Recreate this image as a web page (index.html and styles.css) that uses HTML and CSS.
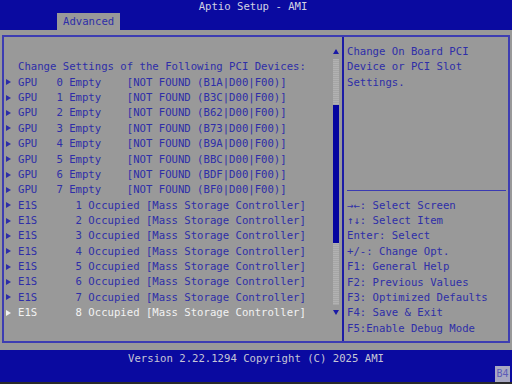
FILE: index.html
```html
<!DOCTYPE html>
<html lang="en">
<head>
    <meta charset="UTF-8">
    <title>Aptio Setup - AMI</title>
    <link rel="stylesheet" href="styles.css">
</head>
<body>
    <div class="screen">
        <!-- 顶部标题栏 -->
        <header class="topbar">
            <div class="title">Aptio Setup - AMI</div>
            <div class="tabs">
                <span class="tab">Advanced</span>
            </div>
        </header>

        <!-- 主框体 -->
        <main class="frame">
            <section class="menu">
                <div class="line"> </div>
                <div class="line heading">Change Settings of the Following PCI Devices:</div>
                <div class="item">GPU   0 Empty    [NOT FOUND (B1A|D00|F00)]</div>
                <div class="item">GPU   1 Empty    [NOT FOUND (B3C|D00|F00)]</div>
                <div class="item">GPU   2 Empty    [NOT FOUND (B62|D00|F00)]</div>
                <div class="item">GPU   3 Empty    [NOT FOUND (B73|D00|F00)]</div>
                <div class="item">GPU   4 Empty    [NOT FOUND (B9A|D00|F00)]</div>
                <div class="item">GPU   5 Empty    [NOT FOUND (BBC|D00|F00)]</div>
                <div class="item">GPU   6 Empty    [NOT FOUND (BDF|D00|F00)]</div>
                <div class="item">GPU   7 Empty    [NOT FOUND (BF0|D00|F00)]</div>
                <div class="item">E1S      1 Occupied [Mass Storage Controller]</div>
                <div class="item">E1S      2 Occupied [Mass Storage Controller]</div>
                <div class="item">E1S      3 Occupied [Mass Storage Controller]</div>
                <div class="item">E1S      4 Occupied [Mass Storage Controller]</div>
                <div class="item">E1S      5 Occupied [Mass Storage Controller]</div>
                <div class="item">E1S      6 Occupied [Mass Storage Controller]</div>
                <div class="item">E1S      7 Occupied [Mass Storage Controller]</div>
                <div class="item selected">E1S      8 Occupied [Mass Storage Controller]</div>
            </section>

            <!-- 滚动条 -->
            <div class="scroll">
                <div class="scroll-up"></div>
                <div class="track">
                    <div class="thumb"></div>
                </div>
                <div class="scroll-down"></div>
            </div>

            <!-- 帮助区 -->
            <aside class="help">
                <div class="help-desc">
                    <div class="line">Change On Board PCI</div>
                    <div class="line">Device or PCI Slot</div>
                    <div class="line">Settings.</div>
                </div>
                <div class="help-keys">
                    <div class="help-sep"></div>
                    <div class="line">→←: Select Screen</div>
                    <div class="line">↑↓: Select Item</div>
                    <div class="line">Enter: Select</div>
                    <div class="line">+/-: Change Opt.</div>
                    <div class="line">F1: General Help</div>
                    <div class="line">F2: Previous Values</div>
                    <div class="line">F3: Optimized Defaults</div>
                    <div class="line">F4: Save &amp; Exit</div>
                    <div class="line">F5:Enable Debug Mode</div>
                </div>
            </aside>
        </main>

        <!-- 底部版本栏 -->
        <footer class="bottombar">
            <div class="version">Version 2.22.1294 Copyright (C) 2025 AMI</div>
            <span class="badge">B4</span>
        </footer>
    </div>
</body>
</html>
```

FILE: styles.css
```css
/* 基础样式 */
* {
    margin: 0;
    padding: 0;
    box-sizing: border-box;
}

html, body {
    background-color: #222;
}

.screen {
    width: 512px;
    height: 384px;
    display: flex;
    flex-direction: column;
    background-color: #999999;
    color: #2e2ea8;
    font-family: "DejaVu Sans Mono", "Liberation Mono", monospace;
    font-size: 10.63px;
    line-height: 15.36px;
    overflow: hidden;
}

/* 顶部标题栏 */
.topbar {
    height: 30px;
    display: flex;
    flex-direction: column;
    background-color: #0a0aa0;
}

.title {
    height: 13px;
    line-height: 13px;
    text-align: center;
    padding-right: 6px;
    color: #d2d2e2;
}

.tabs {
    height: 17px;
    display: flex;
    padding-left: 57px;
}

.tab {
    padding: 1px 6px 0;
    background-color: #999999;
    color: #2e2ea8;
}

/* 主框体 */
.frame {
    height: 308px;
    margin: 5px 2px 0;
    display: flex;
    border: 2px solid #3d3db2;
}

.menu {
    flex: 1;
    padding: 7px 0 5px 2px;
}

.line {
    height: 15.36px;
    white-space: pre;
}

.heading {
    padding-left: 12px;
}

.item {
    height: 15.36px;
    display: flex;
    align-items: center;
    white-space: pre;
}

.item::before {
    content: "";
    width: 0;
    height: 0;
    border-left: 5px solid currentColor;
    border-top: 3px solid transparent;
    border-bottom: 3px solid transparent;
    margin-right: 7px;
}

.item.selected {
    color: #f2f2f2;
}

/* 滚动条 */
.scroll {
    width: 6px;
    margin-right: 3px;
    padding: 7px 0 5px;
    display: flex;
    flex-direction: column;
}

.scroll-up, .scroll-down {
    height: 15.36px;
    display: flex;
    align-items: center;
    justify-content: center;
}

.scroll-up::before {
    content: "";
    border-bottom: 5px solid #1a1aa6;
    border-left: 3px solid transparent;
    border-right: 3px solid transparent;
}

.scroll-down::before {
    content: "";
    border-top: 5px solid #1a1aa6;
    border-left: 3px solid transparent;
    border-right: 3px solid transparent;
}

.track {
    height: 245.76px;
    background: repeating-linear-gradient(0deg, #a6a6a6 0, #a6a6a6 1px, #b2b2b2 1px, #b2b2b2 2px);
}

.thumb {
    margin-top: 46px;
    height: 138px;
    background-color: #0505a0;
}

/* 帮助区 */
.help {
    width: 166px;
    padding: 7px 0 5px 3px;
    display: flex;
    flex-direction: column;
    border-left: 2px solid #1c1ca6;
}

.help-keys {
    margin-top: auto;
}

.help-sep {
    height: 15.36px;
    display: flex;
    align-items: center;
}

.help-sep::after {
    content: "";
    flex: 1;
    height: 1px;
    margin-right: 2px;
    background-color: #3a3ab2;
}

/* 底部版本栏 */
.bottombar {
    position: relative;
    height: 34px;
    margin-top: 7px;
    padding-top: 1px;
    background-color: #0a0aa0;
    border-bottom: 2px solid #2a2a2a;
    color: #c6c6d6;
    text-align: center;
}

.badge {
    position: absolute;
    right: 2px;
    bottom: 0;
    width: 15px;
    height: 16px;
    line-height: 16px;
    font-size: 10px;
    text-align: center;
    background-color: #a8a8c2;
    color: #5c5cb8;
}
```
